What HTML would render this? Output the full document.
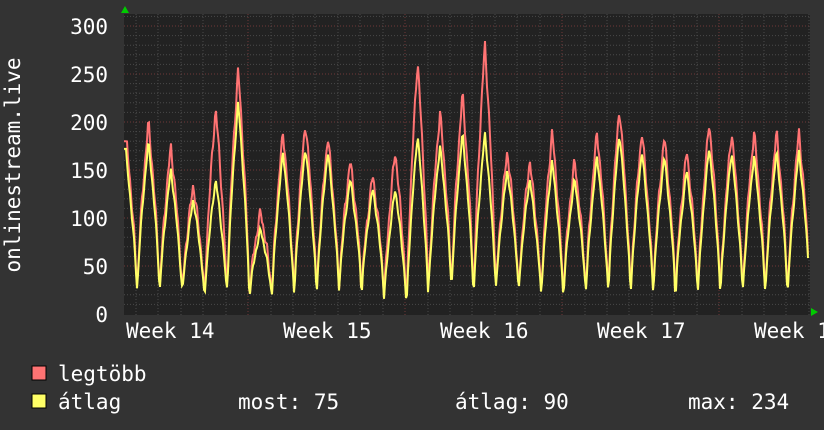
<!DOCTYPE html>
<html><head><meta charset="utf-8"><style>
html,body{margin:0;padding:0;background:#333;width:824px;height:430px;overflow:hidden}
svg{display:block}
text{font-family:"DejaVu Sans Mono","Liberation Mono",monospace;font-size:21px;fill:#fff}
</style></head><body>
<svg id="g" width="824" height="430" xmlns="http://www.w3.org/2000/svg">
<rect width="824" height="430" fill="#333"/>
<rect x="124" y="14" width="686" height="301" fill="#222"/>
<g id="grid"></g>
<polyline id="mx" fill="none" stroke="#ff7373" stroke-width="2"/>
<polyline id="av" fill="none" stroke="#ffff66" stroke-width="2"/>
<polygon points="121,13 125,6 129,13" fill="#0c0"/>
<polygon points="811,308 818,312 811,316" fill="#0c0"/>
<text x="108" y="34" text-anchor="end">300</text>
<text x="108" y="82" text-anchor="end">250</text>
<text x="108" y="130" text-anchor="end">200</text>
<text x="108" y="178" text-anchor="end">150</text>
<text x="108" y="226" text-anchor="end">100</text>
<text x="108" y="274" text-anchor="end">50</text>
<text x="108" y="322" text-anchor="end">0</text>
<text transform="translate(20,165) rotate(-90)" text-anchor="middle">onlinestream.live</text>
<text x="126" y="338">Week 14</text>
<text x="283" y="338">Week 15</text>
<text x="440" y="338">Week 16</text>
<text x="597" y="338">Week 17</text>
<text x="754" y="338">Week 18</text>
<rect x="32" y="366" width="14" height="14" fill="#ff7373" stroke="#000" stroke-width="1"/>
<rect x="32" y="394" width="14" height="14" fill="#ffff66" stroke="#000" stroke-width="1"/>
<text x="58" y="381">legtöbb</text>
<text x="58" y="409">átlag</text>
<text x="238" y="409">most: 75</text>
<text x="455" y="409">átlag: 90</text>
<text x="688" y="409">max: 234</text>
</svg>
<script>
var g=document.getElementById("grid"),h="";
for(var v=10;v<=310;v+=10){var y=314-v*0.96;var maj=v%50==0;
h+='<line x1="124" x2="810" y1="'+y+'" y2="'+y+'" stroke="'+(maj?'#703838':'#4a4a4a')+'" stroke-dasharray="1,2"/>';}
for(var x=136;x<810;x+=22.43){var dx=Math.round(x);var maj=[247,404,561,718].some(function(m){return Math.abs(m-dx)<3});
h+='<line y1="14" y2="315" x1="'+dx+'" x2="'+dx+'" stroke="'+(maj?'#703838':'#4a4a4a')+'" stroke-dasharray="1,2"/>';}
g.innerHTML=h;
var pk=[185,200,175,135,215,255,107,190,200,185,160,145,170,265,210,230,282,170,160,190,160,190,215,190,185,170,200,190,190,190,190];
var av=[175,190,160,128,150,234,95,180,185,180,150,140,140,200,185,200,200,160,150,170,150,175,200,180,175,160,185,180,175,180,180];
var mn=[30,35,30,25,25,30,25,25,30,30,35,30,20,15,40,30,30,35,30,25,30,30,30,30,30,30,30,30,30,30,30];
var pm="",pa="";
for(var x=124;x<=808;x++){var t=(x-126)/22.43;var d=Math.floor(t+0.5);var ph=t+0.5-d;
if(d<0)d=0;if(d>30)d=30;
var f2=Math.pow(Math.max(0,1-Math.abs(ph-0.5)*2.1),0.75);
var wig=Math.sin(x*1.7)*4+Math.sin(x*0.9)*3;
var m=mn[d]+(pk[d]-mn[d])*f2+wig;var a=mn[d]+(av[d]-mn[d])*f2*0.95+wig*0.5-3;
if(x<127){m=180;a=172;}
pm+=x+","+(314-m*0.96).toFixed(1)+" ";pa+=x+","+(314-a*0.96).toFixed(1)+" ";}
document.getElementById("mx").setAttribute("points",pm);
document.getElementById("av").setAttribute("points",pa);
</script>
</body></html>
